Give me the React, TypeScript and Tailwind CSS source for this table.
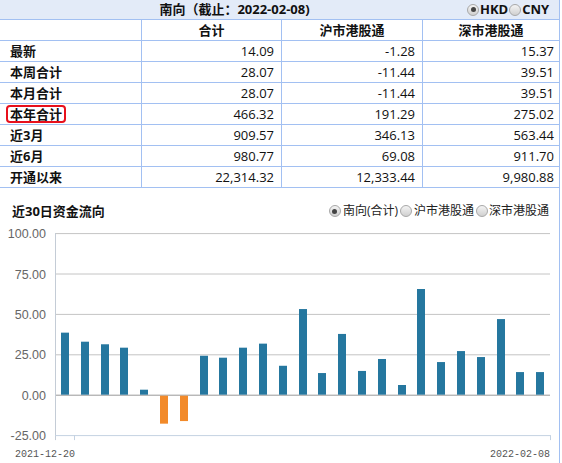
import React from 'react'

const rows = [
  { label: '最新', total: '14.09', sh: '-1.28', sz: '15.37' },
  { label: '本周合计', total: '28.07', sh: '-11.44', sz: '39.51' },
  { label: '本月合计', total: '28.07', sh: '-11.44', sz: '39.51' },
  { label: '本年合计', total: '466.32', sh: '191.29', sz: '275.02', mark: true },
  { label: '近3月', total: '909.57', sh: '346.13', sz: '563.44' },
  { label: '近6月', total: '980.77', sh: '69.08', sz: '911.70' },
  { label: '开通以来', total: '22,314.32', sh: '12,333.44', sz: '9,980.88' },
]

// 近30日 daily net flow (南向合计)
const flows = [
  38.4, 32.8, 31.2, 29.1, 3.1, -17.3, -15.7, 24.1, 22.9, 29.1, 31.6, 17.9, 53.0,
  13.4, 37.6, 14.7, 22.1, 6.0, 65.4, 20.2, 27.0, 23.3, 46.8, 14.0, 14.0,
]

const cjk = "font-['Open_Sans','Noto_Sans_CJK_SC',sans-serif]"

function Radio({ checked }: { checked?: boolean }) {
  return (
    <span className="inline-flex w-[12px] h-[12px] rounded-full border border-[#a8a8a8] bg-gradient-to-b from-[#f4f4f4] to-[#d0d0d0] items-center justify-center shrink-0">
      {checked && <span className="w-[5px] h-[5px] rounded-full bg-[#444]" />}
    </span>
  )
}

function Chart() {
  // svg top sits at page y=222
  const top = 222
  const zero = 394.7 - top
  const unit = 1.616
  const ticks = [100, 75, 50, 25, 0, -25]
  const y = (v: number) => zero - v * unit
  return (
    <svg width="559" height="241" className="block">
      {ticks.map(t => (
        <g key={t}>
          {t !== -25 && (
            <line
              x1="55"
              x2="550"
              y1={y(t) + 0.5}
              y2={y(t) + 0.5}
              stroke={t === 0 ? '#999' : '#c4c4c4'}
              strokeWidth="1"
            />
          )}
          <text
            x="46"
            y={y(t) + 5}
            textAnchor="end"
            fontSize="12.5"
            fill="#666"
            fontFamily="Liberation Sans, Arial, sans-serif"
          >
            {t.toFixed(2)}
          </text>
        </g>
      ))}
      <line x1="55.5" x2="55.5" y1={y(100)} y2={y(-25) + 5} stroke="#c4ccd6" />
      <line x1="55" x2="550" y1={y(-25) + 0.5} y2={y(-25) + 0.5} stroke="#c4d2e2" />
      <line x1="74.5" x2="74.5" y1={y(-25)} y2={y(-25) + 5} stroke="#c4d2e2" />
      <line x1="550.5" x2="550.5" y1={y(-25)} y2={y(-25) + 5} stroke="#c4d2e2" />
      {flows.map((v, i) => {
        const x = 61 + 19.8 * i
        const h = Math.abs(v) * unit
        return (
          <rect
            key={i}
            x={Math.round(x)}
            y={v >= 0 ? zero - h : zero + 1}
            width="8"
            height={h}
            fill={v >= 0 ? '#25779f' : '#f28a2a'}
          />
        )
      })}
      <text x="15" y="235" fontSize="10" fill="#555" fontFamily="Liberation Mono, monospace">
        2021-12-20
      </text>
      <text x="550" y="235" textAnchor="end" fontSize="10" fill="#555" fontFamily="Liberation Mono, monospace">
        2022-02-08
      </text>
    </svg>
  )
}

export default function App() {
  return (
    <div className={`w-[560px] h-[463px] border-r border-[#a2c0f2] bg-white text-[13px] text-[#111] ${cjk}`}>
      {/* header bar */}
      <div className="h-[20px] flex items-center bg-[#e3ebf8] border-b border-[#a2c0f2]">
        <div className="w-[467px] flex justify-center pl-[2px] font-bold leading-[19px]">
          南向（截止：2022-02-08)
        </div>
        <div className="flex items-center font-bold leading-[19px]">
          <Radio checked />
          <span className="ml-[1px] mr-[1px]">HKD</span>
          <Radio />
          <span className="ml-[1px]">CNY</span>
        </div>
      </div>

      {/* table */}
      <div className="grid grid-cols-[142px_140px_141px_1fr]">
        <div className="h-[21px] border-r border-b border-[#a2c0f2]" />
        {['合计', '沪市港股通', '深市港股通'].map((h, i) => (
          <div
            key={h}
            className={`h-[21px] border-b border-[#a2c0f2] flex items-center justify-center font-bold leading-[20px] ${i < 2 ? 'border-r' : ''}`}
          >
            {h}
          </div>
        ))}
        {rows.map(r => (
          <React.Fragment key={r.label}>
            <div className="h-[21px] border-r border-b border-[#a2c0f2] flex items-center pl-[6px]">
              <span
                className={`h-[18px] px-[2px] border-2 rounded-[4px] flex items-center font-bold leading-[14px] ${r.mark ? 'border-[#e8101c]' : 'border-transparent'}`}
              >
                {r.label}
              </span>
            </div>
            <div className="h-[21px] border-r border-b border-[#a2c0f2] flex items-center justify-end pr-[7px] leading-[20px]">
              {r.total}
            </div>
            <div className="h-[21px] border-r border-b border-[#a2c0f2] flex items-center justify-end pr-[7px] leading-[20px]">
              {r.sh}
            </div>
            <div className="h-[21px] border-b border-[#a2c0f2] flex items-center justify-end pr-[5px] leading-[20px]">
              {r.sz}
            </div>
          </React.Fragment>
        ))}
      </div>

      {/* chart */}
      <div className="h-[34px] flex items-end justify-between pl-[12px] pr-[10px] pb-[2px]">
        <span className="font-bold leading-[18px]">近30日资金流向</span>
        <div className="flex items-center text-[12px] text-[#222] leading-[18px]">
          <Radio checked />
          <span className="ml-[2px] mr-[2px]">南向(合计)</span>
          <Radio />
          <span className="ml-[2px] mr-[2px]">沪市港股通</span>
          <Radio />
          <span className="ml-[1px]">深市港股通</span>
        </div>
      </div>
      <Chart />
    </div>
  )
}
